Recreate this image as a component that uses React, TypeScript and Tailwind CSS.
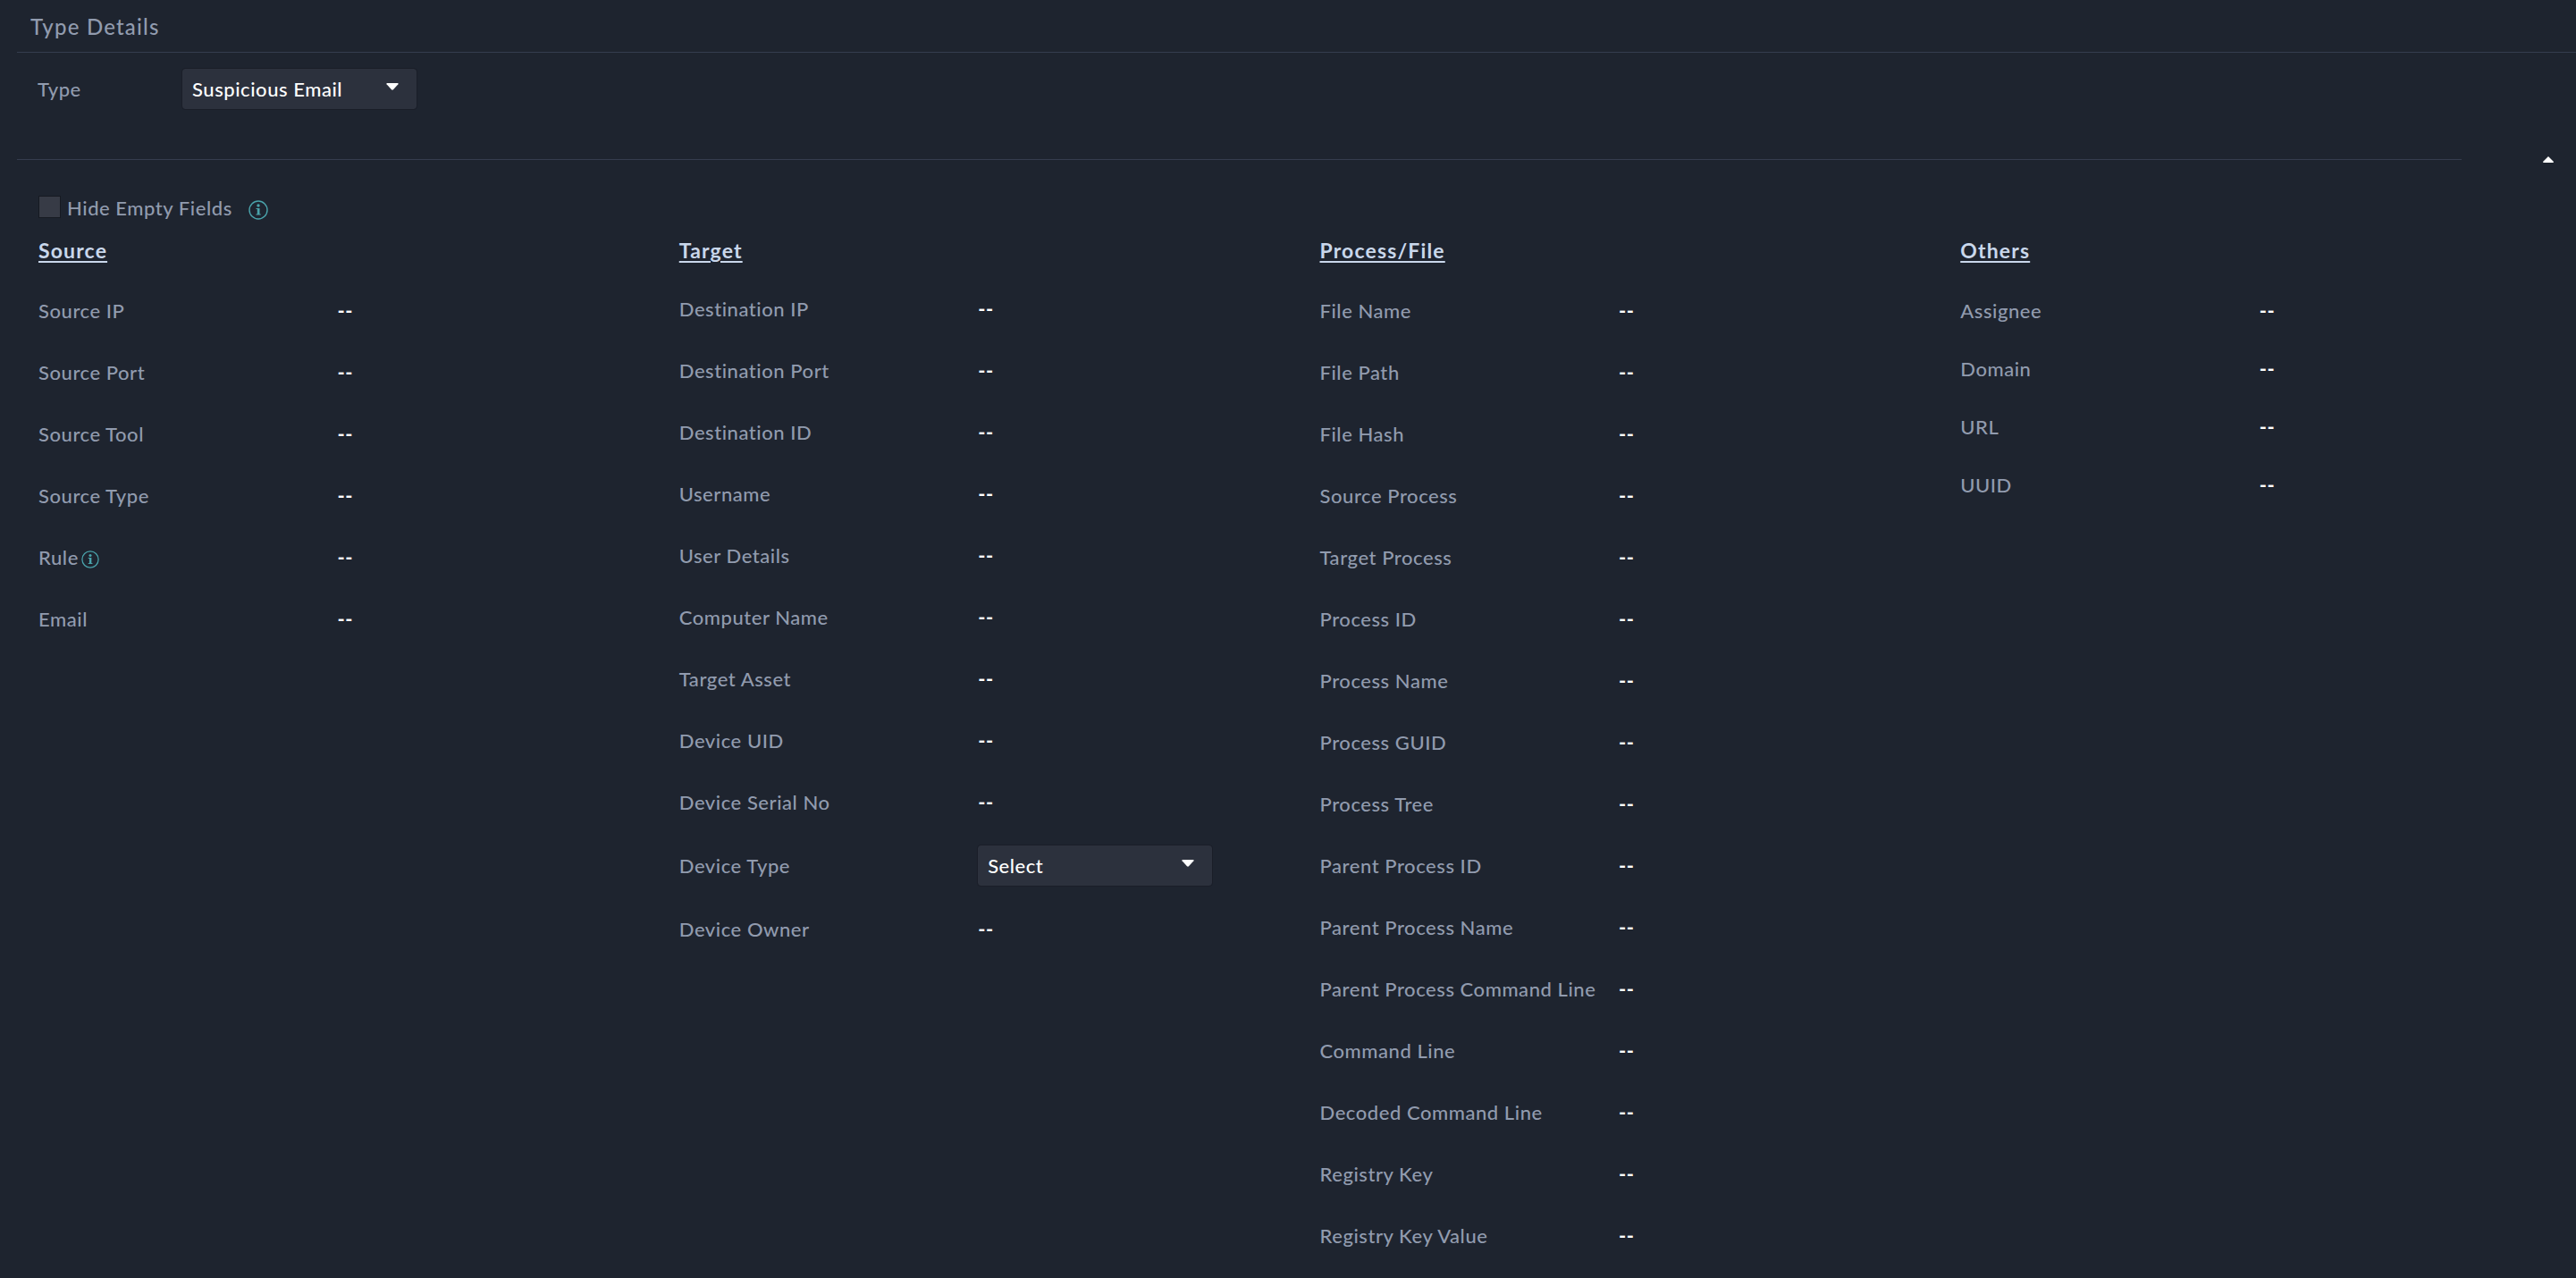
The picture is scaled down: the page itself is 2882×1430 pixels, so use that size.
import { useId, useState } from "react";
import type { ReactNode } from "react";

type Field = { label: string; info?: boolean; options?: string[] };
type Group = { title: string; rowClass: string; listClass: string; fields: Field[] };

const names = (...labels: string[]): Field[] => labels.map((label) => ({ label }));

const groups: Group[] = [
  {
    title: "Source",
    rowClass: "min-h-[69px]",
    listClass: "pt-[18px]",
    fields: [
      ...names("Source IP", "Source Port", "Source Tool", "Source Type"),
      { label: "Rule", info: true },
      { label: "Email" },
    ],
  },
  {
    title: "Target",
    rowClass: "min-h-[69px]",
    listClass: "pt-4",
    fields: [
      ...names(
        "Destination IP",
        "Destination Port",
        "Destination ID",
        "Username",
        "User Details",
        "Computer Name",
        "Target Asset",
        "Device UID",
        "Device Serial No",
      ),
      { label: "Device Type", options: ["Select", "Laptop", "Desktop", "Server", "Mobile"] },
      { label: "Device Owner" },
    ],
  },
  {
    title: "Process/File",
    rowClass: "min-h-[69px]",
    listClass: "pt-[18px]",
    fields: names(
      "File Name",
      "File Path",
      "File Hash",
      "Source Process",
      "Target Process",
      "Process ID",
      "Process Name",
      "Process GUID",
      "Process Tree",
      "Parent Process ID",
      "Parent Process Name",
      "Parent Process Command Line",
      "Command Line",
      "Decoded Command Line",
      "Registry Key",
      "Registry Key Value",
    ),
  },
  {
    title: "Others",
    rowClass: "min-h-[65px]",
    listClass: "pt-5",
    fields: names("Assignee", "Domain", "URL", "UUID"),
  },
];

function InfoIcon({ className }: { className: string }) {
  return (
    <svg viewBox="0 0 22 22" fill="none" className={className} aria-hidden="true">
      <circle cx="11" cy="11" r="10" stroke="currentColor" strokeWidth="1.4" />
      <circle cx="11" cy="6" r="1.7" fill="currentColor" />
      <path d="M8.500 8.900h4v6.500h1.200v1.100H8.500v-1.100h1.300V10H8.500z" fill="currentColor" />
    </svg>
  );
}

function Dropdown({ id, options }: { id: string; options: string[] }) {
  return (
    <div className="relative w-[262px]">
      <select
        id={id}
        className="block h-[45px] w-full appearance-none rounded-[3px] bg-[#2c313d] pr-12 pl-[11px] font-medium text-white outline-1 outline-[#1a1e28]"
      >
        {options.map((o) => (
          <option key={o}>{o}</option>
        ))}
      </select>
      <svg
        viewBox="0 0 14 8"
        className="pointer-events-none absolute top-4 right-5 h-2 w-3.5 text-white"
        aria-hidden="true"
      >
        <path d="M1 0h12q1 .3.4 1.200L8 7.300q-1 .9-2 0L.6 1.200Q0 .3 1 0z" fill="currentColor" />
      </svg>
    </div>
  );
}

function Row({ className, label, children }: { className: string; label: ReactNode; children: ReactNode }) {
  return (
    <div className={`flex items-center ${className}`}>
      <dt className="w-1/2 shrink-0 whitespace-nowrap">{label}</dt>
      <dd className="text-white">{children}</dd>
    </div>
  );
}

function FieldGroup({ group }: { group: Group }) {
  const base = useId();
  return (
    <section className="min-w-0 pr-5 pl-7">
      <h2 className="text-[23px] leading-[30px] font-bold tracking-wider text-[#c9d7eb] underline decoration-2 underline-offset-3">
        {group.title}
      </h2>
      <dl className={group.listClass}>
        {group.fields.map((f) =>
          f.options ? (
            <Row key={f.label} className="min-h-[73px]" label={<label htmlFor={base}>{f.label}</label>}>
              <Dropdown id={base} options={f.options} />
            </Row>
          ) : (
            <Row
              key={f.label}
              className={group.rowClass}
              label={
                <span className="flex items-center gap-[3px]">
                  {f.label}
                  {f.info && <InfoIcon className="mt-1 size-5 text-[#4aa3ab]" />}
                </span>
              }
            >
              <span className="font-bold">--</span>
            </Row>
          ),
        )}
      </dl>
    </section>
  );
}

export default function App() {
  const [open, setOpen] = useState(true);
  return (
    <main className="min-h-screen overflow-x-hidden bg-[#1e242f] font-['Lato',sans-serif] text-[22px] leading-[30px] font-medium tracking-wide text-[#919bae]">
      <header className="ml-[19px] border-b border-[#353d4e] pt-[15px] pr-4 pb-[13px] pl-[15px]">
        <h1 className="text-[24px] leading-[30px] font-medium tracking-wider">Type Details</h1>
      </header>

      <div className="flex items-center pt-[18px] pl-[42px]">
        <label htmlFor="type" className="w-[162px]">
          Type
        </label>
        <Dropdown id="type" options={["Suspicious Email", "Malware", "Phishing"]} />
      </div>

      <div className="flex items-center pt-[43px] pr-[18px] pl-[19px]">
        <div className="h-px flex-1 bg-[#353d4e]" />
        <button
          type="button"
          aria-label="Toggle type fields"
          aria-expanded={open}
          onClick={() => setOpen(!open)}
          className="ml-[83px] flex size-[27px] items-center justify-center"
        >
          <svg viewBox="0 0 12 7" className={open ? "h-[7px] w-3 text-white" : "h-[7px] w-3 rotate-180 text-white"}>
            <path d="M6 0l6 6q0 1-1 1H1Q0 7 0 6z" fill="currentColor" />
          </svg>
        </button>
      </div>

      {open && (
        <>
          <div className="flex items-center pt-[26px] pl-[43px]">
            <input
              id="hide-empty"
              type="checkbox"
              className="mb-1 size-[25px] appearance-none border border-[#161a22] bg-[#373b46] checked:bg-[#4aa3ab]"
            />
            <label htmlFor="hide-empty" className="pl-[7px]">
              Hide Empty Fields
            </label>
            <InfoIcon className="mt-1 ml-[18px] size-[22px] text-[#4aa3ab]" />
          </div>
          <div className="grid grid-cols-4 pt-[17px] pl-[15px]">
            {groups.map((g) => (
              <FieldGroup key={g.title} group={g} />
            ))}
          </div>
        </>
      )}
    </main>
  );
}
